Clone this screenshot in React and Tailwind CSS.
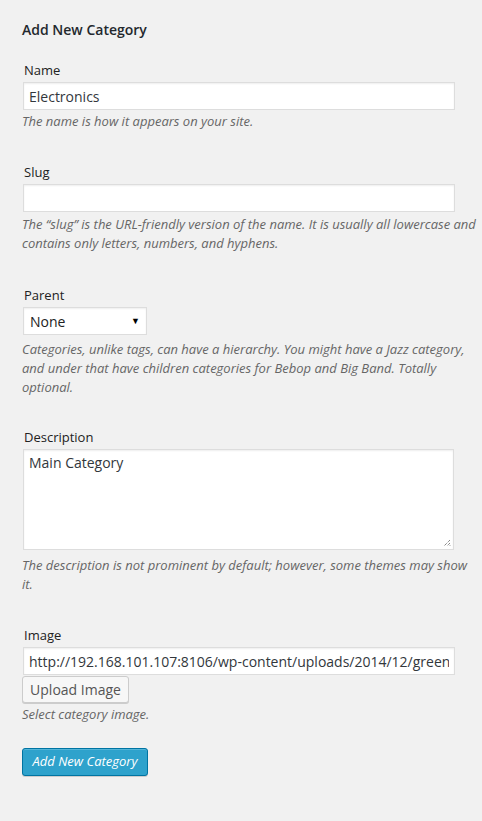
export default function App() {
  return (
    <div className="min-h-[821px] w-[482px] bg-[#f1f1f1] text-[#444] font-['Open_Sans',sans-serif]">
      <div className="pl-[22px] pr-[5px] pt-[20px]">
        <h3 className="text-[14px] font-semibold text-[#23282d] leading-[20px]">
          Add New Category
        </h3>

        {/* Name */}
        <div className="mt-[21px]">
          <label className="ml-[2px] block text-[13px] leading-[18px] text-[#222]">Name</label>
          <input
            defaultValue="Electronics"
            className="mt-[3px] ml-[1px] block w-[432px] h-[28px] border border-[#ddd] bg-white px-[5px] text-[14px] text-[#32373c] shadow-[inset_0_1px_2px_rgba(0,0,0,0.07)] outline-none"
          />
          <p className="mt-[2px] text-[13px] italic leading-[19px] text-[#666]">
            The name is how it appears on your site.
          </p>
        </div>

        {/* Slug */}
        <div className="mt-[32px]">
          <label className="ml-[2px] block text-[13px] leading-[18px] text-[#222]">Slug</label>
          <input
            className="mt-[3px] ml-[1px] block w-[432px] h-[28px] border border-[#ddd] bg-white px-[5px] text-[14px] shadow-[inset_0_1px_2px_rgba(0,0,0,0.07)] outline-none"
          />
          <p className="mt-[3px] text-[13px] italic leading-[19px] text-[#666]">
            The “slug” is the URL-friendly version of the name. It is usually all lowercase and contains only letters, numbers, and hyphens.
          </p>
        </div>

        {/* Parent */}
        <div className="mt-[33px]">
          <label className="ml-[2px] block text-[13px] leading-[18px] text-[#222]">Parent</label>
          <div className="mt-[3px] ml-[1px] flex h-[28px] w-[124px] items-center justify-between border border-[#ddd] bg-white pl-[6px] pr-[6px] shadow-[inset_0_1px_2px_rgba(0,0,0,0.07)]">
            <span className="text-[14px] text-[#222]">None</span>
            <span className="text-[9px] text-black">▼</span>
          </div>
          <p className="mt-[5px] text-[13px] italic leading-[19px] text-[#666]">
            Categories, unlike tags, can have a hierarchy. You might have a Jazz category, and under that have children categories for Bebop and Big Band. Totally optional.
          </p>
        </div>

        {/* Description */}
        <div className="mt-[31px]">
          <label className="ml-[2px] block text-[13px] leading-[18px] text-[#222]">Description</label>
          <div className="relative mt-[3px] ml-[1px] h-[101px] w-[431px] border border-[#ddd] bg-white px-[5px] shadow-[inset_0_1px_2px_rgba(0,0,0,0.07)]">
            <span className="text-[14px] text-[#32373c]">Main Category</span>
            <svg className="absolute bottom-[2px] right-[2px]" width="8" height="8" viewBox="0 0 8 8">
              <path d="M7 1L1 7M7 4L4 7M7 6.5L6.5 7" stroke="#555" strokeWidth="1" strokeDasharray="1 1" />
            </svg>
          </div>
          <p className="mt-[6px] text-[13px] italic leading-[19px] text-[#666]">
            The description is not prominent by default; however, some themes may show it.
          </p>
        </div>

        {/* Image */}
        <div className="mt-[32px]">
          <label className="ml-[2px] block text-[13px] leading-[18px] text-[#222]">Image</label>
          <input
            defaultValue="http://192.168.101.107:8106/wp-content/uploads/2014/12/green-shoes.jpg"
            className="mt-[3px] ml-[1px] block w-[432px] h-[28px] border border-[#ddd] bg-white px-[5px] text-[14px] text-[#32373c] shadow-[inset_0_1px_2px_rgba(0,0,0,0.07)] outline-none"
          />
          <button className="mt-[1px] flex h-[27px] w-[107px] items-center justify-center rounded-[3px] border border-[#ccc] bg-[#f7f7f7] text-[14px] text-[#555] shadow-[0_1px_0_#ccc]">
            Upload Image
          </button>
          <p className="mt-[2px] text-[13px] italic leading-[19px] text-[#666]">
            Select category image.
          </p>
        </div>

        <button className="mt-[24px] flex h-[28px] w-[126px] items-center justify-center rounded-[3px] border border-[#0074a2] bg-[#2ea2cc] text-[13px] italic text-white shadow-[inset_0_1px_0_rgba(120,200,230,0.5),0_1px_0_rgba(0,0,0,0.15)]">
          Add New Category
        </button>
      </div>
    </div>
  );
}
